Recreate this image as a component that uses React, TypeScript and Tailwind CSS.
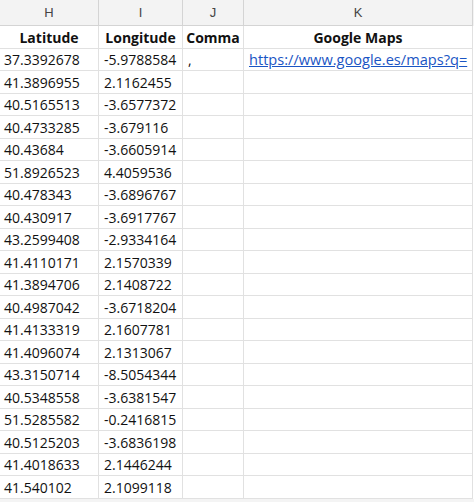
import React from "react";

const lat = [
  "37.3392678","41.3896955","40.5165513","40.4733285","40.43684","51.8926523","40.478343","40.430917","43.2599408","41.4110171",
  "41.3894706","40.4987042","41.4133319","41.4096074","43.3150714","40.5348558","51.5285582","40.5125203","41.4018633","41.540102",
];
const lon = [
  "-5.9788584","2.1162455","-3.6577372","-3.679116","-3.6605914","4.4059536","-3.6896767","-3.6917767","-2.9334164","2.1570339",
  "2.1408722","-3.6718204","2.1607781","2.1313067","-8.5054344","-3.6381547","-0.2416815","-3.6836198","2.1446244","2.1099118",
];

const cell = "border-r border-b border-[#e1e1e1] flex items-center overflow-visible whitespace-nowrap";

export default function App() {
  return (
    <div className="w-[474px] h-[502px] overflow-hidden bg-white text-[#111]" style={{ fontFamily: '"Open Sans", sans-serif' }}>
      <div className="flex h-[26px] bg-[#f3f3f3] text-[13px] text-[#444]" style={{ fontFamily: '"Liberation Sans", sans-serif' }}>
        {[
          ["H", "w-[99px]"],
          ["I", "w-[84px]"],
          ["J", "w-[61px]"],
          ["K", "w-[229px]"],
        ].map(([l, w]) => (
          <div key={l} className={`${w} border-r border-b border-[#d4d4d4] flex items-center justify-center`}>{l}</div>
        ))}
      </div>
      <div className="flex h-[23px] text-[14px] font-bold">
        <div className={`w-[99px] justify-center ${cell}`}>Latitude</div>
        <div className={`w-[84px] justify-center ${cell}`}>Longitude</div>
        <div className={`w-[61px] justify-center ${cell}`}>Comma</div>
        <div className={`w-[229px] justify-center ${cell}`}>Google Maps</div>
      </div>
      {lat.map((la, i) => (
        <div key={i} className={`flex text-[14px] ${i % 2 === 0 ? "h-[22px]" : "h-[23px]"}`}>
          <div className={`w-[99px] pl-[4px] ${cell}`}>{la}</div>
          <div className={`w-[84px] pl-[5px] ${cell}`}>{lon[i]}</div>
          <div className={`w-[61px] pl-[5px] ${cell}`}>{i === 0 ? "," : ""}</div>
          <div className={`w-[229px] pl-[5px] ${cell}`}>
            {i === 0 ? <span className="text-[14.6px] text-[#1a55c4] underline">https://www.google.es/maps?q=</span> : ""}
          </div>
        </div>
      ))}
      <div className="h-[10px] bg-[#f4f4f4]" />
    </div>
  );
}
